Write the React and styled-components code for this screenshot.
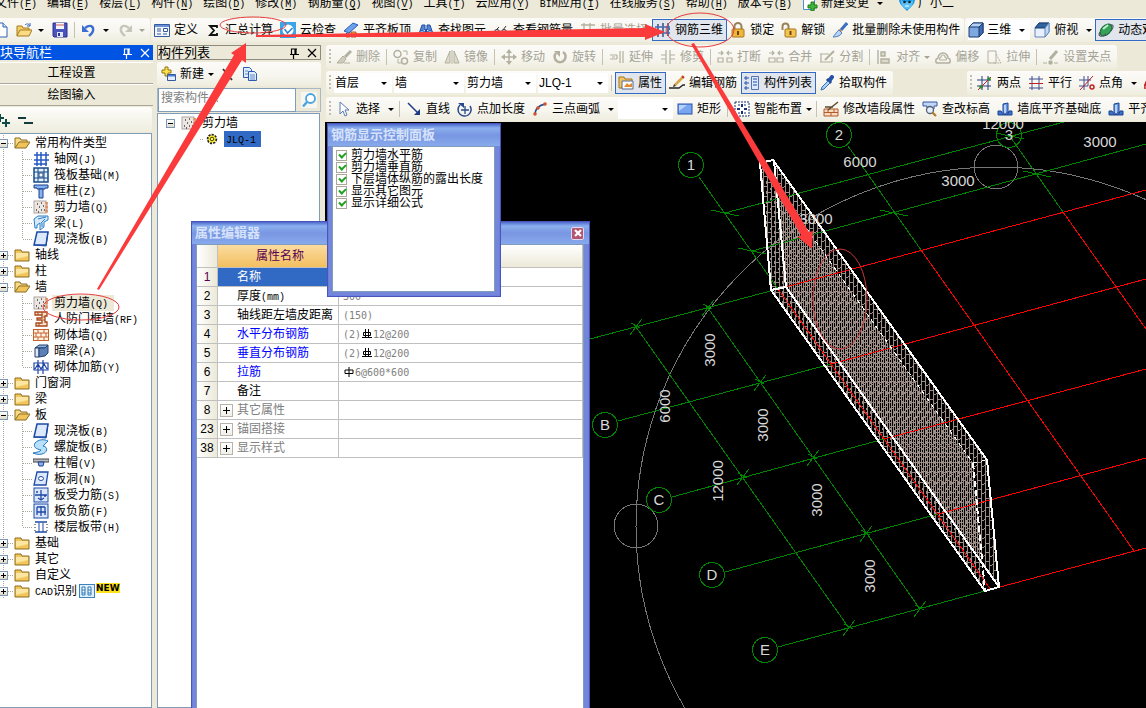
import React, { useState } from "react";
import styled, { createGlobalStyle, css } from "styled-components";

const GlobalStyle = createGlobalStyle`
  * { box-sizing: border-box; }
  body {
    margin: 0;
    overflow: hidden;
    background: #ece9d8;
    font: 12px/16px "Liberation Sans", "Noto Sans CJK SC", sans-serif;
    color: #000;
  }
  button, input, select { font: inherit; color: inherit; margin: 0; }
`;

/* ---------- icons ---------- */

const B = "#1f4fa8";
const G = "#b3b09f";

const glyphs = {
  newDoc: <><path d="M2 1h8l4 4v10H2z" fill="#fff" stroke="#2f62b5" /><path d="M10 1v4h4" fill="#cfe0fa" stroke="#2f62b5" /></>,
  open: <><path d="M1 14V4h5l1 2h6v3" fill="#f3cf6b" stroke="#a77a1c" /><path d="M1 14l3-6h12l-3 6z" fill="#fbdc83" stroke="#a77a1c" /><path d="M9 3c2-2 4-1 5 1m0-3v3h-3" fill="none" stroke="#3565c4" /></>,
  save: <><path d="M1 1h14v14H2l-1-1z" fill="#4b53bd" stroke="#2d338f" /><path d="M4 1h8v6H4z" fill="#f4f6ff" /><path d="M4 3h8" stroke="#d35d5d" /><path d="M5 10h6v5H5z" fill="#dfe3f7" /><path d="M6 11h2v3H6z" fill="#2d338f" /></>,
  undo: <><path d="M4 6c5-4 9-2 8 3-1 3-3 4-4 5" fill="none" stroke="#3c6fd1" strokeWidth="2.4" /><path d="M1 3v7h7z" fill="#3c6fd1" /></>,
  redo: <><path d="M12 6c-5-4-9-2-8 3 1 3 3 4 4 5" fill="none" stroke="#c8c6ba" strokeWidth="2.4" /><path d="M15 3v7H8z" fill="#c8c6ba" /></>,
  define: <><path d="M.5 2.500h15v12H.5z" fill="#f2f6fd" stroke="#34599c" /><path d="M1 3h14v2H1z" fill="#6a92d8" /><path d="M3 7h4M3 9h4M3 12h4M9 12h4" stroke="#34599c" /><path d="M9.500 6.500h4v3h-4z" fill="#fff" stroke="#34599c" /></>,
  sigma: <path d="M12 6V4H5l4 4.500L5 13h7v-2" fill="none" stroke="#111" strokeWidth="1.800" />,
  cloud: <><rect width="16" height="16" fill="#3ba3e8" /><circle cx="8" cy="8" r="5.500" fill="#fff" /><path d="M4.500 7l3 4 5-5" fill="none" stroke="#2b83c9" strokeWidth="1.500" /></>,
  slabTop: <><path d="M1 9l9-8 5 2-9 8z" fill="#6ba1ea" stroke="#2a5cb0" /><path d="M3 12h4v3H3zM8 10h5v5H8z" fill="#f4b53a" stroke="#a33a18" strokeWidth=".8" /><path d="M1 14l3-3" stroke="#222" /></>,
  find: <><path d="M2 9l2-6h3v5M14 9l-2-6H9v5" fill="#5585d6" stroke={B} /><circle cx="4" cy="11.500" r="3" fill="#9dbdf1" stroke={B} /><circle cx="12" cy="11.500" r="3" fill="#9dbdf1" stroke={B} /><path d="M7 7h2v4H7z" fill={B} /></>,
  glasses: <><path d="M3 8l3-3M10 8l3-4" stroke="#333" /><circle cx="4" cy="10" r="2.500" fill="#dfe9fb" stroke="#333" /><circle cx="11" cy="10" r="2.500" fill="#dfe9fb" stroke="#333" /></>,
  batch: <path d="M1 3h14M1 8h8M1 13h6M4 1v14M10 1v8M8 11h7M11 9v6" stroke={G} fill="none" strokeWidth="1.300" />,
  rebar3d: <><path d="M3 2v13M8 1v14M13 1v13" stroke="#20386f" fill="none" strokeWidth="1.300" /><path d="M0 5h15M0 11h15" stroke="#4169b4" fill="none" strokeWidth="1.300" /><path d="M12 4l3 3-3 3" fill="none" stroke="#4169b4" /></>,
  lock: <><path d="M4.500 8V4.500a3.500 3.500 0 017 0V8" fill="none" stroke="#98835a" strokeWidth="2" /><rect x="2" y="7" width="12" height="8" rx="1" fill="#efb73f" stroke="#a87618" /><path d="M8 9v4" stroke="#6e4708" strokeWidth="2" /></>,
  unlock: <><path d="M1.500 8V4.500a3 3 0 016 0V8" fill="none" stroke="#98835a" strokeWidth="2" /><rect x="4" y="7" width="11" height="8" rx="1" fill="#f3c452" stroke="#a87618" /><path d="M9.500 9v4" stroke="#6e4708" strokeWidth="2" /></>,
  brush: <><path d="M15 1L9 8" stroke="#3a70c2" strokeWidth="3" /><path d="M10 9L8 7l-2 1 2 3z" fill="#d97a31" /><path d="M7 8l3 3c-2 3-5 4-9 4 2-2 3-5 6-7z" fill="#b9d3f5" stroke="#4f7fc4" /></>,
  cube: <><path d="M1 5l4-4h10v10l-4 4H1z" fill="#7fa7e0" stroke="#1a3a6a" /><path d="M1 5l4-4h10l-4 4z" fill="#b4d2f6" stroke="#1a3a6a" /><path d="M11 5v10l4-4V1z" fill="#3f6db5" stroke="#1a3a6a" /></>,
  topView: <><path d="M1 6l4-5h10v9l-4 5H1z" fill="#e7f0fc" stroke="#5f86bd" /><path d="M1 6l4-5h10l-4 5z" fill="#31639f" stroke="#1a3a6a" /><path d="M11 6v9l4-5V1z" fill="#c4d8f2" stroke="#5f86bd" /></>,
  orbit: <><ellipse cx="8" cy="8" rx="7" ry="4.500" transform="rotate(-45 8 8)" fill="#36a257" stroke="#1b6334" /><path d="M5 7l5-4" stroke="#b9f1c8" strokeWidth="2" /><path d="M2 10c-3 4 2 6 6 2M12 3c4-1 4 2 1 6" fill="none" stroke="#4b5a62" strokeWidth="1.200" /></>,

  erase: <><path d="M15 2L9 8" stroke={G} strokeWidth="3" /><path d="M7 7l3 3-3 4H1z" fill="#cfccbd" stroke={G} /><path d="M8 14h6" stroke={G} /></>,
  copyObj: <><circle cx="4.500" cy="5" r="3.500" fill="none" stroke={G} strokeWidth="1.500" /><circle cx="11.500" cy="12" r="3" fill="none" stroke={G} strokeWidth="1.500" /><path d="M10 2h4v4M5 10v4h3" fill="none" stroke={G} /></>,
  mirror: <><path d="M6 2v12H1zM10 2v12h5z" fill="#dddacb" stroke={G} /><path d="M8 1v14" stroke={G} /></>,
  move: <><path d="M8 2v12M2 8h12" stroke={G} strokeWidth="1.500" /><path d="M8 0l3 4H5zM8 16l3-4H5zM0 8l4-3v6zM16 8l-4-3v6z" fill={G} /></>,
  rotate: <><path d="M4 4a5.500 5.500 0 107-1" fill="none" stroke={G} strokeWidth="2.500" /><path d="M2 2h6v6z" fill={G} /></>,
  extend: <path d="M1 6h7M1 10h7M8 6v4M11 2v12M14 2v12M3 8h3" stroke={G} fill="none" strokeWidth="1.200" />,
  trim: <path d="M1 6h5M1 10h5M10 6h5M10 10h5M6 1v14M10 1v14" stroke={G} fill="none" strokeWidth="1.200" />,
  breakAt: <path d="M1 4h5M10 4h5M4 2l2 2-2 2M12 2l-2 2 2 2M1 9h5v4H1zM10 9h5v4h-5z" stroke={G} fill="none" strokeWidth="1.200" />,
  merge: <path d="M1 4h5M10 4h5M4 2l2 2-2 2M12 2l-2 2 2 2M1 9h6v4H1zM9 9h6v4H9z" stroke={G} fill="none" strokeWidth="1.200" />,
  split: <><path d="M1 5h9M1 13h12M2 5v8M13 8v5" stroke={G} fill="none" strokeWidth="1.200" /><path d="M15 2l-9 9" stroke={G} strokeWidth="2" /></>,
  align: <path d="M2 1v14M5 3h4v4H5zM5 10h8v4H5z" fill="#dddacb" stroke={G} strokeWidth="1.400" />,
  offset: <><path d="M3 9a5 5 0 1110 0c3 1 3 5 0 5H3c-3 0-3-4 0-5z" fill="none" stroke={G} strokeWidth="1.500" /><path d="M6 8a2 2 0 114 0c2 1 2 3 0 3H6c-2 0-2-2 0-3z" fill="none" stroke={G} strokeWidth="1.200" /></>,
  stretch: <><path d="M2 2h8v12H2z" fill="none" stroke={G} /><path d="M10 5l5 9H7" fill="none" stroke={G} strokeDasharray="2 1" /></>,
  grip: <><path d="M14 2L7 10" stroke={G} strokeWidth="3" /><path d="M0 14h4M6 12h3v3H6zM11 14h4" stroke={G} fill={G} /></>,

  props: <><path d="M1 2h5l1 2h7v9H1z" fill="#f4c766" stroke="#a3741c" /><path d="M4 6h11v8H4z" fill="#fff" stroke="#52698f" /><path d="M6 12l3-4 2 2 3-2v4z" fill="#e08a2e" /></>,
  editBar: <><path d="M0 13h10l4-3h2" stroke="#222" fill="none" strokeWidth="1.300" /><path d="M14 2L6 10" stroke="#d9a648" strokeWidth="2.500" /><path d="M13 1l2 2" stroke="#c0392b" strokeWidth="2" /><path d="M5 9l2 2-3 1z" fill="#333" /></>,
  partList: <><path d="M1 2h2v2H1zM1 7h2v2H1zM1 12h2v2H1z" fill="#fff" stroke={B} /><path d="M4 3h2M4 8h2M4 13h2" stroke={B} strokeDasharray="1 1" /><path d="M7.500 1.500h7v13h-7z" fill="#dce8fb" stroke="#5274ae" /><path d="M9 4h4M9 7h4M9 10h4" stroke={B} /></>,
  picker: <><path d="M8 4l4 4" stroke="#1c3a7a" strokeWidth="3" /><path d="M10 6l3-4" stroke="#2452a8" strokeWidth="4" strokeLinecap="round" /><path d="M9 6L3 12l-1 3 3-1 6-6z" fill="#a9d3f5" stroke="#3a6cb5" /></>,
  twoPoint: <><path d="M0 5h14M0 11h14M5 1v14M11 1v14" stroke="#2b3f83" /><path d="M1 15L14 2" stroke="#c22020" /><circle cx="4" cy="12" r="1.800" fill="#2c8a2c" /><circle cx="12" cy="4" r="1.800" fill="#2c8a2c" /></>,
  parallel: <><path d="M1 4h14M1 13h14M4 1v14M11 1v14" stroke="#3e4f94" /><path d="M1 8.500h14" stroke="#c22020" /></>,
  pointAngle: <><path d="M0 5h12M0 11h9M5 1v14M9 1v10" stroke="#3e4f94" /><path d="M1 15L14 1" stroke="#c22020" /><circle cx="13" cy="12" r="2" fill="none" stroke="#c22020" strokeWidth="1.500" /></>,
  arcAux: <path d="M2 14c-1-8 4-12 10-12M1 10h5M10 1v6" fill="none" stroke="#c22020" strokeWidth="1.500" />,

  cursor: <path d="M4 1v12l3-3 2 5 2-1-2-5h4z" fill="#fff" stroke="#5a7db8" />,
  line: <><path d="M2 2l10 10" stroke="#1d3c83" strokeWidth="1.500" /><path d="M14 14H8l6-6z" fill="#1d3c83" /></>,
  pointLen: <><path d="M3 4a6.500 6.500 0 1010 1" fill="none" stroke="#27498e" strokeWidth="1.500" /><path d="M1 2h6v5z" fill="#27498e" /><path d="M8 5v8M4 9h8" stroke="#27498e" strokeWidth="1.300" /></>,
  arc3: <><path d="M3 14c0-6 4-10 11-11" fill="none" stroke="#27498e" strokeWidth="1.500" /><circle cx="3" cy="13" r="1.800" fill="#d0542e" /><circle cx="6" cy="7" r="1.800" fill="#d0542e" /><circle cx="13" cy="3" r="1.800" fill="#d0542e" /></>,
  rect: <><rect x="1" y="3" width="14" height="10" fill="#79a4ef" stroke="#2452a8" /><path d="M2 4h8l-8 6z" fill="#b9d2fb" /></>,
  smart: <><rect x="1" y="1" width="14" height="14" fill="#fff" stroke="#17336f" strokeDasharray="2 1" /><path d="M8 3v3M8 10v3M3 8h3M10 8h3" stroke="#17336f" strokeWidth="2" /><path d="M4 4h2M10 4h2M4 12h2M10 12h2" stroke="#17336f" /></>,
  wallEdit: <><path d="M1 8h14v7H1z" fill="#f7dcc0" stroke="#b35a2c" /><path d="M1 11.500h14M5 8v3.500M11 8v3.500M8 11.500V15" stroke="#b35a2c" /><path d="M15 1L5 9M2 6h8" stroke="#5b4a30" strokeWidth="1.500" /></>,
  elevation: <><path d="M1 1h14v4h-3v3H5V5H1z" fill="#c2d5f7" stroke="#3357a0" /><circle cx="8" cy="9" r="3.500" fill="#e3eefe" stroke="#56616f" strokeWidth="1.300" /><path d="M10.500 11.500L14 15" stroke="#b5762b" strokeWidth="2.200" /></>,
  base: <><path d="M6 3l5-1v10H6z" fill="#6a9ae6" stroke="#1b4391" /><path d="M1 10h3l2 3h5l1-3h3v4H1z" fill="#3c72cb" stroke="#1b4391" /><path d="M7 4h2v8H7z" fill="#b5d0fa" /></>,

  folder: <><path d="M1 3h6l1 2h7v9H1z" fill="#f1c65b" stroke="#8d6c24" /><path d="M2 6h12v3L2 12z" fill="#fbe6a2" /></>,
  folderOpen: <><path d="M1 13V3h5l1 2h6v3" fill="#f7db85" stroke="#8d6c24" /><path d="M1 13l4-6h11l-4 6z" fill="#f0c458" stroke="#8d6c24" /></>,
  grid: <path d="M1 4h15M1 9h15M1 13h13M4 1v14M8 1v14M13 1v14" stroke="#2458c4" strokeWidth="1.500" />,
  raft: <><rect x="1" y="1" width="14" height="14" fill="#e6effd" stroke="#164a86" strokeWidth="1.500" /><path d="M5 1v14M11 1v14M1 5h14M1 11h14" stroke="#164a86" /><rect x="6" y="6" width="4" height="4" fill="#fff" stroke="#164a86" /></>,
  column: <><path d="M1 2h14v3h-3v1H4V5H1z" fill="#86b1f0" stroke="#1b3f8b" /><path d="M6 6h4v9H6z" fill="#86b1f0" stroke="#1b3f8b" /></>,
  shear: <><rect x="1" y="2" width="12" height="12" fill="#ece6e2" stroke="#b0a59f" /><path d="M4 5h1M8 4h1M6 8h1M10 7h1M3 11h1M8 11h1M11 11h1M5 13h1" stroke="#444" strokeWidth="1.500" /><path d="M14 3v11M12 4h3M12 8h3M12 12h3" stroke="#d9793f" /></>,
  beam: <><path d="M1 4l4-3h10v4l-4 2v5l-4 3V8L4 10v3H2z" fill="#d6eafc" stroke="#2a7dc2" /><path d="M5 4l8-2M8 8l4-4M9 12V8" stroke="#2a7dc2" /></>,
  slab: <><path d="M4 1h11l-2 13H1z" fill="#dce9fd" stroke="#1d4aa5" strokeWidth="1.500" /><path d="M1 14l12 1 2-14" fill="none" stroke="#1d4aa5" /></>,
  frameWall: <><path d="M2 1h12v4h-2v6h2v4H3v-3h6V9H4V7h5V4H2z" fill="#fbe3cb" stroke="#a8481d" strokeWidth="1.300" /><path d="M5 1v3M9 1v3M6 12v3M10 6h2M10 9h2" stroke="#a8481d" /></>,
  brick: <><rect x=".5" y="2.500" width="15" height="11" fill="#fff3e7" stroke="#c7622b" /><path d="M1 6h14M1 10h14M5 3v3M11 3v3M8 6v4M3 6v4M13 6v4M5 10v3M11 10v3" stroke="#c7622b" /></>,
  hidden: <><path d="M2 5l4-3h9l-3 3z" fill="#8fb1de" stroke="#273f6b" /><path d="M2 5h4v9H2z" fill="#dfe9f8" stroke="#273f6b" /><path d="M6 5h6l3-3v8l-3 3-6 1z" fill="#5b80b8" stroke="#273f6b" /></>,
  masonry: <path d="M1 4h14v7H1zM5 1v14M10 1v14M2 10l3-5 3 5 3-5 3 5" fill="none" stroke="#2045a8" strokeWidth="1.200" />,
  spiral: <path d="M2 4c4-4 9-4 13-2l-5 5c6 1 4 7-1 8-4 1-6 0-9-1 4-1 7-1 8-3-5-1-8-3-6-7z" fill="#b7e0fa" stroke="#2475bf" />,
  cap: <><path d="M0 4h16v3H0z" fill="#b9bcc2" stroke="#444" /><path d="M5 7h6l-1 4H6z" fill="#8fb1ea" stroke="#1b3f8b" /></>,
  hole: <><path d="M4 1h11l-2 13H1z" fill="#dce9fd" stroke="#1d4aa5" strokeWidth="1.300" /><ellipse cx="8" cy="7.500" rx="2.500" ry="2" fill="#fff" stroke="#1d4aa5" /></>,
  slabBar: <><rect x="1" y="1" width="14" height="14" fill="#dce6fb" stroke="#1d4aa5" /><path d="M3 5h2M11 9h2M2 8h12M8 3v10M5 11l3 2 3-2" fill="none" stroke="#1d4aa5" strokeWidth="1.300" /></>,
  negBar: <><rect x="1" y="1" width="14" height="14" fill="#dce6fb" stroke="#1d4aa5" /><path d="M4 4h8M4 9h9M8 3v10M4 4v8M12 4v8" fill="none" stroke="#1d4aa5" strokeWidth="1.300" /></>,
  strip: <><path d="M2 3h12M2 13h12" stroke="#1d4aa5" strokeWidth="1.500" /><path d="M6 4v9M10 4v9" stroke="#1d4aa5" /><path d="M2 5v8M14 5v8" stroke="#222" strokeDasharray="1 2" /></>,
  cad: <><rect x=".5" y="1.500" width="15" height="13" fill="#dff0fd" stroke="#3d83bb" /><path d="M3 4h3v8H3zM9 4h3v8H9z" fill="#fff" stroke="#2c76b5" /><path d="M3 7h3M3 10h3M9 7h3M9 10h3" stroke="#2c76b5" /></>,
  gear: <><circle cx="8" cy="8" r="4" fill="#ffef32" stroke="#222" strokeDasharray="2 1" strokeWidth="2.500" /><circle cx="8" cy="8" r="3.500" fill="#ffef32" /><circle cx="8" cy="8" r="1.800" fill="#fff56a" stroke="#444000" /></>,
  newPart: <><path d="M5 1h3v3h3v3H8v3H5V7H2V4h3z" fill="#ffe14a" stroke="#8f7411" /><path d="M7.500 8.500h8v6h-8z" fill="#e4eefd" stroke="#34599c" /><path d="M8 9h7v1.500H8z" fill="#4b7ed3" /></>,
  del: <path d="M4 3l9 11M12 3L5 13" stroke="#333" strokeWidth="1.800" />,
  copy: <><path d="M1.500 1.500h6l2 2v8h-8z" fill="#e2edfc" stroke="#2a5cb0" /><path d="M6.500 5.500h6l2 2v7h-8z" fill="#e2edfc" stroke="#2a5cb0" /><path d="M3 5h3M3 8h3M8 9h5M8 11h5M8 13h5" stroke="#5b8ad1" /></>,
  search: <><circle cx="9.500" cy="6.500" r="4.500" fill="#fff" stroke="#49a4e0" strokeWidth="1.800" /><path d="M6 10l-4 4.500" stroke="#49a4e0" strokeWidth="2.500" /></>,
  newChange: <><path d="M1.500 1.500h11v13h-11z" fill="#fff" stroke="#4a90d0" /><path d="M9 7h3v3h3v3h-3v3H9v-3H6v-3h3z" fill="#3fb53a" stroke="#1d7a1a" /></>,
  avatar: <><path d="M0 4c0 5 3 7 8 12 5-5 8-7 8-12L12 0H4z" fill="#1f98e4" /><path d="M2 5c0 12 12 12 12 0l-3 2H5z" fill="#5cc1f5" /><circle cx="5.500" cy="7" r="1.300" fill="#123" /><circle cx="10.500" cy="7" r="1.300" fill="#123" /><path d="M6 11h4" stroke="#fff" /></>,
  pin: <path d="M5 4h6M5.500 3.500v6M10 4v5.500M9 4v5.500M4 9.500h9M7.500 10v4" fill="none" stroke="currentColor" strokeWidth="1.200" />,
  close: <path d="M4 4l8 8M12 4l-8 8" stroke="currentColor" strokeWidth="1.200" />,
  addAll: <path d="M0 6h8M4 2v8M6 11h8M10 7v8" stroke="#0d4b48" strokeWidth="2" />,
  removeAll: <path d="M0 6h8M6 11h9" stroke="#123c3a" strokeWidth="2" />,
};

const IconSvg = styled.svg`
  flex: none;
  width: 16px;
  height: 16px;
`;

const Icon = ({ name }) => (
  <IconSvg viewBox="0 0 16 16" fill="none" aria-hidden="true">{glyphs[name]}</IconSvg>
);

/* ---------- shared text ---------- */

const Latin = styled.span`
  font: 10px/12px "Liberation Mono", monospace;
`;

// half-width characters sit on a 6px pitch beside the 12px Chinese ones
const Mixed = ({ children }) =>
  children.split(/([\x21-\x7e]+)/).map((part, i) =>
    i % 2 ? <Latin key={i}>{part}</Latin> : part
  );

const Caret = styled.span`
  flex: none;
  width: ${(p) => (p.$wide ? "17px" : "12px")};
  display: flex;
  justify-content: ${(p) => (p.$wide ? "center" : "flex-start")};
  &::after {
    content: "";
    border: 3px solid transparent;
    border-top: 3px solid ${(p) => (p.$off ? "#a5a396" : "#000")};
    border-bottom: 0;
  }
`;

/* ---------- frame ---------- */

const Frame = styled.div`
  position: relative;
  display: flex;
  flex-direction: column;
  min-height: 100vh;
  overflow: hidden;
`;

const MenuBar = styled.nav`
  display: flex;
  align-items: flex-start;
  height: 23px;
  margin: -5px 0 0 -10px;
  white-space: nowrap;
`;

const MenuItem = styled.button`
  display: flex;
  align-items: center;
  gap: 3px;
  height: 16px;
  padding: 0 5px;
  border: 0;
  background: none;
  white-space: nowrap;
  u { text-underline-offset: 2px; }
`;

const MainBar = styled.div`
  display: flex;
  gap: 1px;
  margin: 0 0 3px -10px;
  min-width: 0;
`;

const Strip = styled.div`
  display: flex;
  align-items: center;
  flex: none;
  height: 24px;
  padding: ${(p) => (p.$grip ? "0 2px 0 3px" : p.$inset ? "0 0 0 2px" : "0")};
  border-radius: 3px;
  background: linear-gradient(#fcfbf8, #f6f5ee 60%, #efedde);
`;

const Grip = styled.span`
  width: 2px;
  height: 16px;
  margin-right: 2px;
  background: repeating-linear-gradient(#c1beaf 0 2px, transparent 2px 4px);
`;

const Sep = styled.span`
  width: 6px;
  height: 16px;
  background: linear-gradient(#c5c2b2, #c5c2b2) 2px 0 / 1px 100% no-repeat;
`;

const ToolBtn = styled.button`
  display: flex;
  align-items: center;
  flex: none;
  height: 22px;
  padding: 0 ${(p) => (p.$caret ? "0" : "3px")} 0 2px;
  border: 1px solid transparent;
  border-right-width: ${(p) => (p.$caret ? "0" : "1px")};
  background: none;
  white-space: nowrap;
  span.text { margin-left: 4px; }
  span.text + ${Caret} { padding-left: 4px; }
  &:disabled { color: #a5a396; }
  ${(p) => p.$active && css`
    border-color: #316ac5;
    background: #e1e6ee;
  `}
`;

const Tool = ({ icon, text, caret, wide, active, disabled }) => (
  <ToolBtn $active={active} $caret={caret} disabled={disabled} aria-label={text || icon}>
    <Icon name={icon} />
    {text && <span className="text">{text}</span>}
    {caret && <Caret $wide={wide} $off={disabled || icon === "redo"} />}
  </ToolBtn>
);

const Tools = ({ items }) =>
  items.map((item, i) => (item === "|" ? <Sep key={i} /> : <Tool key={i} {...item} />));

const PickWrap = styled.label`
  position: relative;
  display: flex;
  flex: none;
  align-items: center;
  width: ${(p) => p.$width}px;
  height: 20px;
  margin: 0 1px;
  background: #fff;
  ${Caret} {
    position: absolute;
    right: 0;
    pointer-events: none;
  }
`;

const Pick = styled.select`
  appearance: none;
  flex: 1;
  min-width: 0;
  height: 20px;
  padding: 0 14px 0 1px;
  border: 0;
  background: transparent;
  ${IconSvg} + & { padding: 0 0 0 3px; }
`;

const Picker = ({ label, value, width }) => (
  <PickWrap $width={width}>
    <Pick aria-label={label} defaultValue={value}>
      <option>{value}</option>
    </Pick>
    <Caret $wide />
  </PickWrap>
);

const Workspace = styled.div`
  display: grid;
  grid-template-columns: 153px 164px minmax(0, 1fr);
  column-gap: 4px;
  flex: 1;
`;

const Panel = styled.section`
  display: flex;
  flex-direction: column;
  min-width: 0;
`;

const PanelHead = styled.header`
  display: flex;
  align-items: center;
  height: 15px;
  margin-bottom: 2px;
  overflow: hidden;
  white-space: nowrap;
  color: ${(p) => (p.$blue ? "#fff" : "#000")};
  background: ${(p) => (p.$blue ? "#0054e3" : "transparent")};
  border: ${(p) => (p.$blue ? "0" : "1px solid #8d8b80")};
  h2 {
    flex: 1;
    margin: 0;
    font-size: 13px;
    font-weight: 400;
    line-height: 15px;
  }
`;

const HeadBtn = styled.button`
  display: flex;
  padding: 0;
  margin-left: 2px;
  border: 0;
  background: none;
`;

const NavButton = styled.button`
  height: 22px;
  padding: 0 10px 0 0;
  border: 1px solid #fff;
  border-width: 1px 0;
  border-bottom-color: #aca899;
  background: #ece9d8;
  flex: none;
`;

const NavTools = styled.div`
  display: flex;
  align-items: center;
  gap: 6px;
  height: 25px;
  margin: 1px 1px 0 -4px;
  background: linear-gradient(#fdfdfb, #efedde);
  border-radius: 0 3px 3px 0;
`;

/* ---------- trees ---------- */

const Tree = styled.ul`
  flex: 1;
  margin: 1px 1px 0 0;
  padding: 1px 0 0 ${(p) => p.$pad || "0"};
  list-style: none;
  background: #fff;
  border: 1px solid #7f9db9;
  border-left-width: ${(p) => (p.$pad ? "1px" : "0")};
  ul { margin: 0; padding: 0; list-style: none; }
`;

const Row = styled.div`
  display: flex;
  align-items: center;
  height: 16px;
  white-space: nowrap;
  padding-left: ${(p) => (p.$child ? "22px" : "0")};
  background: ${(p) => p.$rail && "repeating-linear-gradient(#a9a69a 0 1px, transparent 1px 2px) 3px 0 / 1px 100% no-repeat"};
`;

const Dots = styled.span`
  width: ${(p) => p.$width}px;
  height: 1px;
  flex: none;
  background: repeating-linear-gradient(90deg, #a9a69a 0 1px, transparent 1px 2px);
`;

const ChildRow = styled(Row)`
  &::before {
    content: "";
    width: 1px;
    align-self: stretch;
    margin-bottom: ${(p) => (p.$last ? "8px" : "0")};
    background: repeating-linear-gradient(#a9a69a 0 1px, transparent 1px 2px);
  }
`;

const Expander = styled.button`
  flex: none;
  width: 9px;
  height: 9px;
  margin-left: -1px;
  padding: 0;
  border: 1px solid #7b98b8;
  background:
    linear-gradient(#000, #000) 50% 50% / 5px 1px no-repeat,
    ${(p) => !p.$open && "linear-gradient(#000, #000) 50% 50% / 1px 5px no-repeat,"}
    linear-gradient(#fff, #dedac9);
`;

const NodeText = styled.span`
  margin-left: 3px;
  padding: 0 ${(p) => (p.$marked ? "6px 0 2px" : "2px")};
  background: ${(p) => (p.$marked ? "#ece9d8" : "transparent")};
`;

const NewTag = styled.span`
  align-self: flex-start;
  font: bold 9px/10px "DejaVu Sans", sans-serif;
  background: #ffe11a;
  margin-left: 1px;
`;

const groups = [
  ["常用构件类型", [["grid", "轴网(J)"], ["raft", "筏板基础(M)"], ["column", "框柱(Z)"], ["shear", "剪力墙(Q)"], ["beam", "梁(L)"], ["slab", "现浇板(B)"]]],
  ["轴线"],
  ["柱"],
  ["墙", [["shear", "剪力墙(Q)", true], ["frameWall", "人防门框墙(RF)"], ["brick", "砌体墙(Q)"], ["hidden", "暗梁(A)"], ["masonry", "砌体加筋(Y)"]]],
  ["门窗洞"],
  ["梁"],
  ["板", [["slab", "现浇板(B)"], ["spiral", "螺旋板(B)"], ["cap", "柱帽(V)"], ["hole", "板洞(N)"], ["slabBar", "板受力筋(S)"], ["negBar", "板负筋(F)"], ["strip", "楼层板带(H)"]]],
  ["基础"],
  ["其它"],
  ["自定义"],
  ["CAD识别"],
];

const NavTree = () => (
  <Tree>
    {groups.map(([name, kids]) => (
      <li key={name}>
        <Row $rail>
          <Expander $open={!!kids} aria-label={name} />
          <Dots $width={6} />
          <Icon name={kids ? "folderOpen" : "folder"} />
          <NodeText><Mixed>{name}</Mixed></NodeText>
          {name === "CAD识别" && <><Icon name="cad" /><NewTag>NEW</NewTag></>}
        </Row>
        {kids && (
          <ul>
            {kids.map(([icon, text, marked], i) => (
              <li key={text}>
                <ChildRow $child $rail $last={i === kids.length - 1}>
                  <Dots $width={10} />
                  <Icon name={icon} />
                  <NodeText $marked={marked}><Mixed>{text}</Mixed></NodeText>
                </ChildRow>
              </li>
            ))}
          </ul>
        )}
      </li>
    ))}
  </Tree>
);

const SearchRow = styled.form`
  display: flex;
  align-items: center;
  height: 24px;
  margin-top: 2px;
  border: 1px solid #a9b7c6;
  input {
    flex: 1;
    min-width: 0;
    height: 24px;
    padding: 0 2px 4px;
    border: 1px solid #7f9db9;
    background: #fff;
  }
  input::placeholder { color: #808080; opacity: 1; }
  button {
    display: flex;
    margin: 0 3px 0 5px;
    padding: 0;
    border: 0;
    background: #f7f6f0;
  }
`;

const PartRow = styled(Row)`
  padding-left: ${(p) => (p.$deep ? "33px" : "0")};
  ${Expander} { margin-right: 6px; }
`;

const Picked = styled.span`
  margin-left: 4px;
  padding: 0 5px 0 2px;
  background: #316ac5;
`;

/* ---------- right side ---------- */

const Ribbon = styled.div`
  display: flex;
  flex-direction: column;
  gap: 2px;
  padding: 0 0 1px 1px;
  overflow: hidden;
`;

const RibbonRow = styled.div`
  display: flex;
`;

const Spacer = styled.span`
  flex: none;
  width: 74px;
`;

const Viewport = styled.div`
  flex: 1;
  display: flex;
  background: #000;
  svg { flex: 1; width: 100%; height: 0; min-height: 100%; }
  text { font: 15px "Liberation Sans", sans-serif; fill: #d8d8d8; text-anchor: middle; }
`;

const bubbles = [
  ["1", 691, 165], ["2", 839, 135], ["3", 1009, 135],
  ["B", 605, 425], ["C", 659, 500], ["D", 712, 575], ["E", 765, 650],
];
const dims = [
  ["6000", 860, 162], ["3000", 958, 181], ["3000", 1100, 142], ["12000", 1003, 124], ["3000", 816, 219],
];
const sideDims = [
  ["3000", 710, 350], ["6000", 665, 406], ["3000", 763, 425],
  ["12000", 718, 481], ["3000", 817, 500], ["3000", 870, 576],
];
const sideTicks = [
  [636, 327], [708, 308], [760, 383], [743, 477], [813, 458], [866, 534], [849, 628], [920, 609],
];
const topTicks = [[725, 213], [752, 251], [894, 213], [1037, 174], [1010, 136]];

const Model = () => (
  <svg role="img" aria-label="钢筋三维">
    <defs>
      <pattern id="meshFront" width="8" height="9" patternUnits="userSpaceOnUse">
        <path d="M1 0h1v9H1zM5 0h1v9H5zM2 3h3v1H2zM6 7h2v1H6zM0 6h1v1H0z" fill="#9c8d87" />
      </pattern>
      <pattern id="meshBack" width="8" height="10" patternUnits="userSpaceOnUse">
        <path d="M3 0h1v10H3zM7 0h1v10H7zM0 2h3v1H0zM4 6h3v1H4zM2 8h1v2H2zM6 1h1v3H6z" fill="#9c8d87" />
      </pattern>
    </defs>
    <g transform="translate(-325 -122)" fill="none" shapeRendering="crispEdges">
      <g stroke="#777">
        <circle cx="996" cy="527" r="360" />
        <circle cx="636" cy="526" r="22" />
        <circle cx="996" cy="167" r="22" />
      </g>
      <path d="M760 163L973 463L985 591L771 290z" fill="url(#meshBack)" />
      <path d="M773 160L987 460L999 587L786 287z" fill="url(#meshFront)" />
      <g stroke="#008500">
        <path d="M590 339L778 289M618 421L831 364M672 497L884 439M725 572L938 514M778 647L985 591" />
        <path d="M725 213L1064 122M752 251L1146 144" />
        <path d="M699 177L778 289M848 146L921 250M1009 135L1063 212" />
        <path d="M636 327L849 628M708 308L920 609" />
        {sideTicks.map(([x, y]) => (
          <path key={x + "-" + y} d={`M${x - 6} ${y + 8}L${x + 6} ${y - 8}M${x - 5} ${y - 4}l9 5`} />
        ))}
        {topTicks.map(([x, y]) => (
          <path key={x + "-" + y} d={`M${x - 14} ${y - 3}L${x + 14} ${y + 3}`} />
        ))}
        {bubbles.map(([name, x, y]) => <circle key={name} cx={x} cy={y} r="12.500" />)}
      </g>
      <g stroke="#f00">
        <path d="M778 289L1146 190M831 364L1146 279M884 439L1146 369M938 514L1146 458M985 591L1146 548" />
        <path d="M778 289L991 590M921 250L1134 551M1063 212L1146 329" />
      </g>
      <g stroke="#fff" strokeWidth="2">
        <path d="M760 163L773 160L987 460L999 587L985 591L771 290z" />
        <path d="M774 161L786 287L999 587M771 290L786 287" />
        <path d="M760 163L973 463L987 460" strokeWidth="1" strokeDasharray="4 4" />
        <path d="M973 463L985 591" strokeDasharray="6 3" />
      </g>
      {bubbles.map(([name, x, y]) => <text key={name} x={x} y={y + 5}>{name}</text>)}
      {dims.map(([n, x, y]) => <text key={n + x} x={x} y={y + 5}>{n}</text>)}
      {sideDims.map(([n, x, y]) => (
        <text key={n + x} transform={`translate(${x + 5} ${y}) rotate(-90)`}>{n}</text>
      ))}
    </g>
  </svg>
);

/* ---------- floating windows ---------- */

const Window = styled.section`
  position: absolute;
  display: flex;
  flex-direction: column;
  padding: 0 5px 4px 4px;
  border: 1px solid #4a55b8;
  background: #7386da;
  box-shadow: inset 0 0 0 1px #6b7fe0;
`;

const PropsWindow = styled(Window)`
  left: 191px;
  top: 221px;
  bottom: -10px;
  width: 399px;
`;

const DisplayWindow = styled(Window)`
  left: 327px;
  top: 123px;
  width: 174px;
  height: 174px;
`;

const TitleBar = styled.header`
  display: flex;
  align-items: center;
  justify-content: space-between;
  flex: none;
  height: 22px;
  margin: 0 -5px 0 -4px;
  padding: 0 5px 0 3px;
  background: linear-gradient(#4d68cc, #8bb0ee 4px, #7896e2 50%, #88a9ec);
  h2 {
    margin: 0;
    font-size: 13px;
    line-height: 20px;
    font-weight: 700;
    color: #d6e2fa;
  }
`;

const CloseBtn = styled.button`
  display: flex;
  align-items: center;
  justify-content: center;
  width: 13px;
  height: 13px;
  padding: 0;
  border: 1px solid #e3d9ef;
  border-radius: 2px;
  background: #b2566f;
  color: #fff;
  svg { width: 12px; height: 12px; flex: none; }
  path { stroke-width: 3px; }
`;

const Pane = styled.div`
  flex: 1;
  background: #fff;
  border: 1px solid #7f9db9;
  padding: ${(p) => p.$pad || "0"};
`;

const Check = styled.label`
  display: flex;
  align-items: center;
  height: 12px;
  gap: 4px;
  line-height: 12px;
  white-space: nowrap;
  input {
    appearance: none;
    flex: none;
    width: 11px;
    height: 11px;
    border: 1px solid #aca899;
    background: #fff;
  }
  input:checked::after {
    content: "";
    display: block;
    width: 3px;
    height: 5px;
    margin: 0 0 0 3px;
    border: solid #21a121;
    border-width: 0 2px 2px 0;
    transform: rotate(45deg);
    box-sizing: content-box;
  }
`;

const PropTable = styled.table`
  width: 100%;
  table-layout: fixed;
  border-collapse: separate;
  border-spacing: 0;
  border-right: 1px solid #c0c0c0;
  th, td {
    height: 19px;
    padding: 0 0 0 4px;
    border: solid #c0c0c0;
    border-width: 0 0 1px 1px;
    font-weight: 400;
    line-height: 16px;
    text-align: left;
    white-space: nowrap;
  }
  thead th {
    height: 23px;
    background: linear-gradient(#fff, #ece9d8);
  }
  thead th.name {
    background: linear-gradient(#fbdca0, #f3bf60);
    color: #5a0050;
    text-align: center;
  }
  tr > :first-child {
    padding: 0;
    border-left: 0;
    text-align: center;
    background: linear-gradient(90deg, #fff, #ece9d8);
  }
`;

const NumCell = styled.th`
  && {
    ${(p) => p.$on && "background: #fdd28a; color: #5a0050;"}
  }
`;

const NameCell = styled.td`
  && {
    padding-left: ${(p) => (p.$group ? "2px" : "19px")};
    color: ${(p) => p.$color};
    ${(p) => p.$on && "background: #316ac5;"}
  }
`;

const ValueCell = styled.td`
  color: #808080;
  ${Latin} { font-family: "DejaVu Sans Mono", monospace; }
`;

const GroupLine = styled.span`
  display: flex;
  align-items: center;
  gap: 4px;
`;

const PlusBox = styled(Expander)`
  width: 13px;
  height: 13px;
  margin: 0;
  border-color: #b5b3aa;
  background:
    linear-gradient(#000, #000) 50% 50% / 7px 1px no-repeat,
    linear-gradient(#000, #000) 50% 50% / 1px 7px no-repeat,
    linear-gradient(#fff, #f0efe8);
`;

const BarSign = styled.svg`
  width: 10px;
  height: 10px;
  margin: 0 1px;
  vertical-align: -1px;
`;

// steel grade mark printed before the bar diameter
const Steel = ({ grade }) => (
  <BarSign viewBox="0 0 10 10" fill="none" stroke="#000" aria-hidden="true">
    {grade === 3
      ? <path d="M1.500 3.500h7v3h-7zM3.500 0v9M6.500 0v9M0 8.500h10" />
      : <path d="M1 3h8v3.500H1zM5 0v10" />}
  </BarSign>
);

const props = [
  ["1", "名称", ""],
  ["2", "厚度(mm)", "300"],
  ["3", "轴线距左墙皮距离", "(150)"],
  ["4", "水平分布钢筋", "(2)", 3, "12@200"],
  ["5", "垂直分布钢筋", "(2)", 3, "12@200"],
  ["6", "拉筋", "", 1, "6@600*600"],
  ["7", "备注", ""],
  ["8", "其它属性", ""],
  ["23", "锚固搭接", ""],
  ["38", "显示样式", ""],
];

const nameColor = (i) => (i === 0 ? "#fff" : i > 6 ? "#808080" : i > 2 && i < 6 ? "#00f" : "#000");

const PropertyEditor = () => (
  <PropsWindow>
    <TitleBar>
      <h2>属性编辑器</h2>
      <CloseBtn aria-label="关闭"><Icon name="close" /></CloseBtn>
    </TitleBar>
    <Pane>
      <PropTable>
        <colgroup>
          <col width="20" />
          <col width="121" />
          <col />
        </colgroup>
        <thead>
          <tr><th /><th className="name">属性名称</th><th /></tr>
        </thead>
        <tbody>
          {props.map(([num, name, value, grade, rest], i) => (
            <tr key={num}>
              <NumCell scope="row" $on={i === 0}>{num}</NumCell>
              <NameCell $group={i > 6} $on={i === 0} $color={nameColor(i)}>
                {i > 6
                  ? <GroupLine><PlusBox aria-label={name} />{name}</GroupLine>
                  : <Mixed>{name}</Mixed>}
              </NameCell>
              <ValueCell>
                <Mixed>{value}</Mixed>
                {grade && <><Steel grade={grade} /><Mixed>{rest}</Mixed></>}
              </ValueCell>
            </tr>
          ))}
        </tbody>
      </PropTable>
    </Pane>
  </PropsWindow>
);

const options = ["剪力墙水平筋", "剪力墙垂直筋", "下层墙体纵筋的露出长度", "显示其它图元", "显示详细公式"];

const DisplayPanel = () => {
  const [checked, setChecked] = useState(options);
  const toggle = (name) =>
    setChecked(checked.includes(name) ? checked.filter((c) => c !== name) : [...checked, name]);

  return (
    <DisplayWindow>
      <TitleBar><h2>钢筋显示控制面板</h2></TitleBar>
      <Pane $pad="2px 3px">
        {options.map((name) => (
          <Check key={name}>
            <input type="checkbox" checked={checked.includes(name)} onChange={() => toggle(name)} />
            {name}
          </Check>
        ))}
      </Pane>
    </DisplayWindow>
  );
};

/* ---------- marks drawn over the window ---------- */

const Overlay = styled.svg`
  position: absolute;
  inset: 0;
  width: 100%;
  height: 100%;
  pointer-events: none;
`;

const Marks = () => (
  <Overlay aria-hidden="true">
    <g fill="#fb3b3b">
      <path d="M97 289L234 55L231 53L246 43L246 63L242 60L99 290z" />
      <path d="M256 35L645 28V24L665 32L645 40V37L256 37z" />
      <path d="M691 44L801 235L798 237L812 249L813 231L809 232L694 43z" />
    </g>
    <g fill="none" stroke="#e63c3c">
      <ellipse cx="253" cy="25" rx="33" ry="8" />
      <ellipse cx="700" cy="30" rx="34" ry="17" />
      <ellipse cx="81" cy="307" rx="38" ry="13" />
      <ellipse cx="840" cy="299" rx="27" ry="50" stroke="#c93838" />
    </g>
  </Overlay>
);

/* ---------- toolbars ---------- */

const menus = [
  ["文件", "F"], ["编辑", "E"], ["楼层", "L"], ["构件", "N"], ["绘图", "D"], ["修改", "M"], ["钢筋量", "Q"],
  ["视图", "V"], ["工具", "T"], ["云应用", "Y"], ["BIM应用", "I"], ["在线服务", "S"], ["帮助", "H"], ["版本号", "B"],
];

const fileTools = [
  { icon: "newDoc" }, { icon: "open", caret: true, wide: true }, { icon: "save" }, "|",
  { icon: "undo", caret: true, wide: true }, { icon: "redo", caret: true, wide: true },
];

const calcTools = [
  { icon: "define", text: "定义" }, { icon: "sigma", text: "汇总计算" }, { icon: "cloud", text: "云检查" },
  { icon: "slabTop", text: "平齐板顶" }, { icon: "find", text: "查找图元" }, { icon: "glasses", text: "查看钢筋量" },
  { icon: "batch", text: "批量选择", disabled: true }, { icon: "rebar3d", text: "钢筋三维", active: true },
  { icon: "lock", text: "锁定" }, { icon: "unlock", text: "解锁" }, { icon: "brush", text: "批量删除未使用构件" },
];

const off = (icon, text, more) => ({ icon, text, disabled: true, ...more });

const editTools = [
  off("erase", "删除"), "|", off("copyObj", "复制"), off("mirror", "镜像"), "|", off("move", "移动"),
  off("rotate", "旋转"), "|", off("extend", "延伸"), off("trim", "修剪"), "|", off("breakAt", "打断"),
  off("merge", "合并"), off("split", "分割"), "|", off("align", "对齐", { caret: true }),
  off("offset", "偏移"), off("stretch", "拉伸"), "|", off("grip", "设置夹点"),
];

const partTools = [
  "|", { icon: "props", text: "属性", active: true }, { icon: "editBar", text: "编辑钢筋" },
  { icon: "partList", text: "构件列表", active: true }, { icon: "picker", text: "拾取构件" },
];

const axisTools = [
  { icon: "twoPoint", text: "两点" }, { icon: "parallel", text: "平行" },
  { icon: "pointAngle", text: "点角", caret: true, wide: true }, { icon: "arcAux", text: "三点辅轴" },
];

const drawTools = [
  { icon: "cursor", text: "选择", caret: true, wide: true }, "|", { icon: "line", text: "直线" },
  { icon: "pointLen", text: "点加长度" }, { icon: "arc3", text: "三点画弧", caret: true, wide: true },
];

const wallTools = [
  { icon: "rect", text: "矩形" }, "|", { icon: "smart", text: "智能布置", caret: true }, "|",
  { icon: "wallEdit", text: "修改墙段属性" }, { icon: "elevation", text: "查改标高" },
  { icon: "base", text: "墙底平齐基础底" }, { icon: "base", text: "平齐板底" },
];

const App = () => (
  <Frame>
    <GlobalStyle />
    <MenuBar>
      {menus.map(([name, key]) => (
        <MenuItem key={name}>
          <span><Mixed>{name}</Mixed><Latin>(<u>{key}</u>)</Latin></span>
        </MenuItem>
      ))}
      <MenuItem><Icon name="newChange" />新建变更<Caret $wide /></MenuItem>
      <MenuItem><Icon name="avatar" />广小二</MenuItem>
    </MenuBar>

    <MainBar>
      <Strip><Tools items={fileTools} /></Strip>
      <Strip><Tools items={calcTools} /></Strip>
      <Strip $inset>
        <PickWrap $width={62}>
          <Icon name="cube" />
          <Pick aria-label="视图" defaultValue="三维"><option>三维</option></Pick>
          <Caret $wide />
        </PickWrap>
        <Tool icon="topView" text="俯视" caret wide />
        <Tool icon="orbit" text="动态观察" active />
      </Strip>
    </MainBar>

    <Workspace>
      <Panel>
        <PanelHead $blue>
          <h2>块导航栏</h2>
          <HeadBtn aria-label="固定"><Icon name="pin" /></HeadBtn>
          <HeadBtn aria-label="关闭"><Icon name="close" /></HeadBtn>
        </PanelHead>
        <NavButton>工程设置</NavButton>
        <NavButton>绘图输入</NavButton>
        <NavTools>
          <Icon name="addAll" />
          <Icon name="removeAll" />
        </NavTools>
        <NavTree />
      </Panel>

      <Panel>
        <PanelHead>
          <h2>构件列表</h2>
          <HeadBtn aria-label="固定"><Icon name="pin" /></HeadBtn>
          <HeadBtn aria-label="关闭"><Icon name="close" /></HeadBtn>
        </PanelHead>
        <Strip>
          <Tools items={[{ icon: "newPart", text: "新建", caret: true }, { icon: "del" }, { icon: "copy" }]} />
        </Strip>
        <SearchRow>
          <input type="text" placeholder="搜索构件..." aria-label="搜索构件" />
          <button type="button" aria-label="搜索"><Icon name="search" /></button>
        </SearchRow>
        <Tree $pad="9px">
          <li>
            <PartRow><Expander $open aria-label="剪力墙" /><Icon name="shear" /><NodeText>剪力墙</NodeText></PartRow>
            <PartRow $deep><Dots $width={4} /><Icon name="gear" /><Picked><Mixed>JLQ-1</Mixed></Picked></PartRow>
          </li>
        </Tree>
      </Panel>

      <Panel>
        <Ribbon>
          <RibbonRow>
            <Strip $grip><Grip /><Tools items={editTools} /></Strip>
          </RibbonRow>
          <RibbonRow>
            <Strip $grip>
              <Grip />
              <Picker label="楼层" value="首层" width={58} />
              <Picker label="构件类型" value="墙" width={70} />
              <Picker label="构件种类" value="剪力墙" width={70} />
              <Picker label="构件名称" value="JLQ-1" width={70} />
              <Tools items={partTools} />
            </Strip>
            <Spacer />
            <Strip $grip><Grip /><Tools items={axisTools} /></Strip>
          </RibbonRow>
          <RibbonRow>
            <Strip $grip>
              <Grip />
              <Tools items={drawTools} />
              <Picker label="绘制参数" value="" width={55} />
              <Tools items={wallTools} />
            </Strip>
          </RibbonRow>
        </Ribbon>
        <Viewport><Model /></Viewport>
      </Panel>
    </Workspace>

    <PropertyEditor />
    <DisplayPanel />
    <Marks />
  </Frame>
);

export default App;
